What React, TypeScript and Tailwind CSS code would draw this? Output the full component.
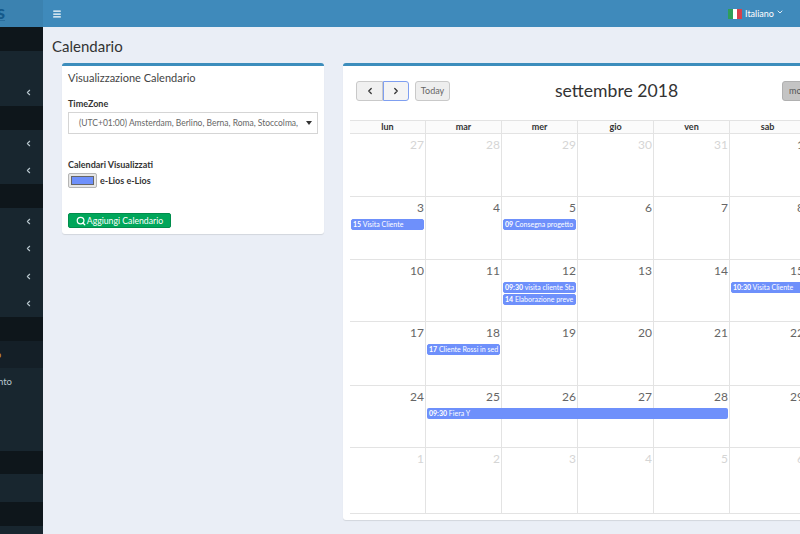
import React from "react";
import { Search, ChevronLeft, ChevronRight, ChevronDown, Menu } from "lucide-react";

type Ev = { t: string; n: string; w?: string };
const FONT = "[font-family:'Lato','Noto_Sans',sans-serif]";

function SideRow({ h, dark, arrow, children }: { h: string; dark?: boolean; arrow?: boolean; children?: React.ReactNode }) {
  return (
    <div className={`${h} ${dark ? "bg-[#0e161b]" : "bg-[#18262f]"} flex items-center justify-end pr-[10px] shrink-0`}>
      {arrow && <ChevronLeft size={9} strokeWidth={3} className="text-[#b8c7ce]" />}
      {children}
    </div>
  );
}

function Sidebar() {
  return (
    <aside className="w-[43px] shrink-0 flex flex-col overflow-hidden">
      <div className="h-[27px] bg-[#3b82b0] shrink-0 flex items-center overflow-hidden relative">
        <span className="absolute right-[38px] top-[2px] text-[19px] font-bold text-[#14598a] leading-[19px]">eLios</span>
        <span className="absolute left-0 top-[20px] w-[5px] h-[1px] bg-[#2a6d9c]"></span>
      </div>
      <SideRow h="h-[24px]" dark />
      <SideRow h="h-[28px]" />
      <SideRow h="h-[27px]" arrow />
      <SideRow h="h-[24px]" dark />
      <SideRow h="h-[26px]" arrow />
      <SideRow h="h-[28px]" arrow />
      <SideRow h="h-[24px]" dark />
      <SideRow h="h-[26px]" arrow />
      <SideRow h="h-[28px]" arrow />
      <SideRow h="h-[28px]" arrow />
      <SideRow h="h-[27px]" arrow />
      <SideRow h="h-[24px]" dark />
      <div className="h-[27px] bg-[#141f27] shrink-0 relative overflow-hidden">
        <span className="absolute right-[42px] top-[7px] text-[9px] text-[#d9a13b]">Calendario</span>
      </div>
      <div className="h-[83px] bg-[#18262f] shrink-0 relative overflow-hidden">
        <span className="absolute right-[31px] top-[7px] text-[9.5px] text-[#b8c7ce] whitespace-nowrap">Appuntamento</span>
      </div>
      <SideRow h="h-[23px]" dark />
      <SideRow h="h-[28px]" />
      <SideRow h="h-[24px]" dark />
      <div className="flex-1 bg-[#18262f]"></div>
    </aside>
  );
}

function Topbar() {
  return (
    <header className="h-[27px] bg-[#3f8abb] shrink-0 flex items-center justify-between pl-[9px] text-white">
      <Menu size={10} strokeWidth={3} />
      <div className="flex items-center w-[72px] h-full">
        <span className="w-[14px] h-[10px] flex mr-[3px]">
          <span className="flex-1 bg-[#2f9e5a]"></span>
          <span className="flex-1 bg-white"></span>
          <span className="flex-1 bg-[#d9414b]"></span>
        </span>
        <span className="text-[9px] text-white whitespace-nowrap">Italiano</span>
        <ChevronDown size={8} strokeWidth={2.5} className="ml-[2px] -mt-[4px]" />
      </div>
    </header>
  );
}

function LeftCard() {
  return (
    <section className="w-[262px] h-[171px] shrink-0 bg-white border-t-[3px] border-[#3c8dbc] rounded-[3px] shadow-[0_1px_1px_rgba(0,0,0,0.1)] px-[6px] pt-[4px] text-[#444]">
      <h3 className="text-[11px] leading-[16px] text-[#444]">Visualizzazione Calendario</h3>
      <div className="text-[9px] font-bold leading-[12px] mt-[12px] text-[#333]">TimeZone</div>
      <div className="mt-[2px] h-[22px] w-[250px] border border-[#d5d5d5] flex items-center justify-between pl-[10px] pr-[5px] text-[8.5px] text-[#666]">
        <span className="whitespace-nowrap">(UTC+01:00) Amsterdam, Berlino, Berna, Roma, Stoccolma,</span>
        <span className="w-0 h-0 border-l-[3px] border-r-[3px] border-t-[4px] border-l-transparent border-r-transparent border-t-[#333]"></span>
      </div>
      <div className="text-[9px] font-bold leading-[12px] mt-[25px] text-[#333]">Calendari Visualizzati</div>
      <div className="flex items-center mt-[2px]">
        <div className="w-[29px] h-[15px] bg-[#e6e6e6] border border-[#b5b5b5] rounded-[2px] flex items-center justify-center">
          <span className="w-[23px] h-[9px] bg-[#6e90fb] border border-[#666]"></span>
        </div>
        <span className="text-[9px] font-bold ml-[3px] pt-[1px] text-[#333]">e-Lios e-Lios</span>
      </div>
      <button className="mt-[25px] h-[15px] w-[103px] rounded-[2px] bg-[#00a65a] border border-[#008d4c] text-white text-[8.7px] flex items-center justify-center gap-[1px] whitespace-nowrap">
        <Search size={10} strokeWidth={3} />
        Aggiungi Calendario
      </button>
    </section>
  );
}

const HEAD = ["lun", "mar", "mer", "gio", "ven", "sab", "dom"];
const ROWS: { d: number; o?: boolean; ev?: Ev[] }[][] = [
  [{ d: 27, o: true }, { d: 28, o: true }, { d: 29, o: true }, { d: 30, o: true }, { d: 31, o: true }, { d: 1 }, { d: 2 }],
  [{ d: 3, ev: [{ t: "15", n: "Visita Cliente" }] }, { d: 4 }, { d: 5, ev: [{ t: "09", n: "Consegna progetto" }] }, { d: 6 }, { d: 7 }, { d: 8 }, { d: 9 }],
  [{ d: 10 }, { d: 11 }, { d: 12, ev: [{ t: "09:30", n: "visita cliente Sta" }, { t: "14", n: "Elaborazione preve" }] }, { d: 13 }, { d: 14 }, { d: 15, ev: [{ t: "10:30", n: "Visita Cliente" }] }, { d: 16 }],
  [{ d: 17 }, { d: 18, ev: [{ t: "17", n: "Cliente Rossi in sed" }] }, { d: 19 }, { d: 20 }, { d: 21 }, { d: 22 }, { d: 23 }],
  [{ d: 24 }, { d: 25 }, { d: 26 }, { d: 27 }, { d: 28 }, { d: 29 }, { d: 30 }],
  [{ d: 1, o: true }, { d: 2, o: true }, { d: 3, o: true }, { d: 4, o: true }, { d: 5, o: true }, { d: 6, o: true }, { d: 7, o: true }],
];
const HEIGHTS = ["h-[63px]", "h-[63px]", "h-[62px]", "h-[64px]", "h-[62px]", "h-[66px]"];

function EventBar({ e }: { e: Ev }) {
  return (
    <div className="h-[11px] mx-[1px] mb-[1px] rounded-[2px] bg-[#6e90fb] border border-[#6e90fb] text-white text-[7px] leading-[9px] px-[1px] overflow-hidden whitespace-nowrap">
      <b>{e.t}</b> {e.n}
    </div>
  );
}

function Calendar() {
  return (
    <section className="w-[546px] h-[457px] shrink-0 bg-white border-t-[3px] border-[#3c8dbc] rounded-[3px] shadow-[0_1px_1px_rgba(0,0,0,0.1)] px-[7px] pt-[15px]">
      <div className="h-[39px] flex items-start relative pl-[6px]">
        <button className="w-[27px] h-[20px] bg-[#f0f0f0] border border-[#c9c9c9] rounded-l-[3px] flex items-center justify-center text-[#333]">
          <ChevronLeft size={10} strokeWidth={3} />
        </button>
        <button className="w-[26px] h-[20px] bg-[#f4f4f4] border border-[#7f9ff0] rounded-r-[3px] flex items-center justify-center text-[#333]">
          <ChevronRight size={10} strokeWidth={3} />
        </button>
        <button className="ml-[6px] w-[35px] h-[20px] bg-[#eeeeee] border border-[#c9c9c9] rounded-[3px] text-[9px] text-[#666]">Today</button>
        <h2 className="absolute left-[205px] top-[-2px] text-[17.6px] leading-[24px] text-[#333] whitespace-nowrap">settembre 2018</h2>
        <button className="absolute left-[432px] top-0 w-[50px] h-[20px] bg-[#c4c4c4] border border-[#b0b0b0] rounded-[3px] text-[9px] text-[#555] text-left pl-[6px]">month</button>
      </div>
      <div className="relative w-[532px]">
        <div className="grid grid-cols-7 h-[14px] bg-[#fbfbfb] border-y border-[#e3e3e3]">
          {HEAD.map((h) => (
            <div key={h} className="border-r border-[#e3e3e3] text-center text-[9px] font-bold leading-[12px] text-[#333]">{h}</div>
          ))}
        </div>
        {ROWS.map((r, i) => (
          <div key={i} className={`grid grid-cols-7 ${HEIGHTS[i]} border-b border-[#e3e3e3] relative`}>
            {r.map((c, j) => (
              <div key={j} className="border-r border-[#e3e3e3]">
                <div className={`text-right pr-[1px] pt-[3px] text-[12px] leading-[16px] h-[22px] ${c.o ? "text-[#d5d5d5]" : "text-[#666]"}`}>{c.d}</div>
                {c.ev?.map((e) => <EventBar key={e.n} e={e} />)}
              </div>
            ))}
            {i === 4 && (
              <div className="absolute left-[77px] top-[22px] w-[301px] h-[11px] rounded-[2px] bg-[#6e90fb] text-white text-[7px] leading-[10px] px-[2px] whitespace-nowrap">
                <b>09:30</b> Fiera Y
              </div>
            )}
          </div>
        ))}
      </div>
    </section>
  );
}

export default function App() {
  return (
    <div className={`flex w-[800px] h-[534px] overflow-hidden bg-[#eaeef6] ${FONT}`}>
      <Sidebar />
      <main className="flex-1 min-w-0 flex flex-col">
        <Topbar />
        <div className="pl-[9px] pt-[9px] h-[36px] shrink-0 text-[15px] leading-[20px] text-[#333]">Calendario</div>
        <div className="flex items-start pl-[19px] gap-[19px]">
          <LeftCard />
          <Calendar />
        </div>
      </main>
    </div>
  );
}
